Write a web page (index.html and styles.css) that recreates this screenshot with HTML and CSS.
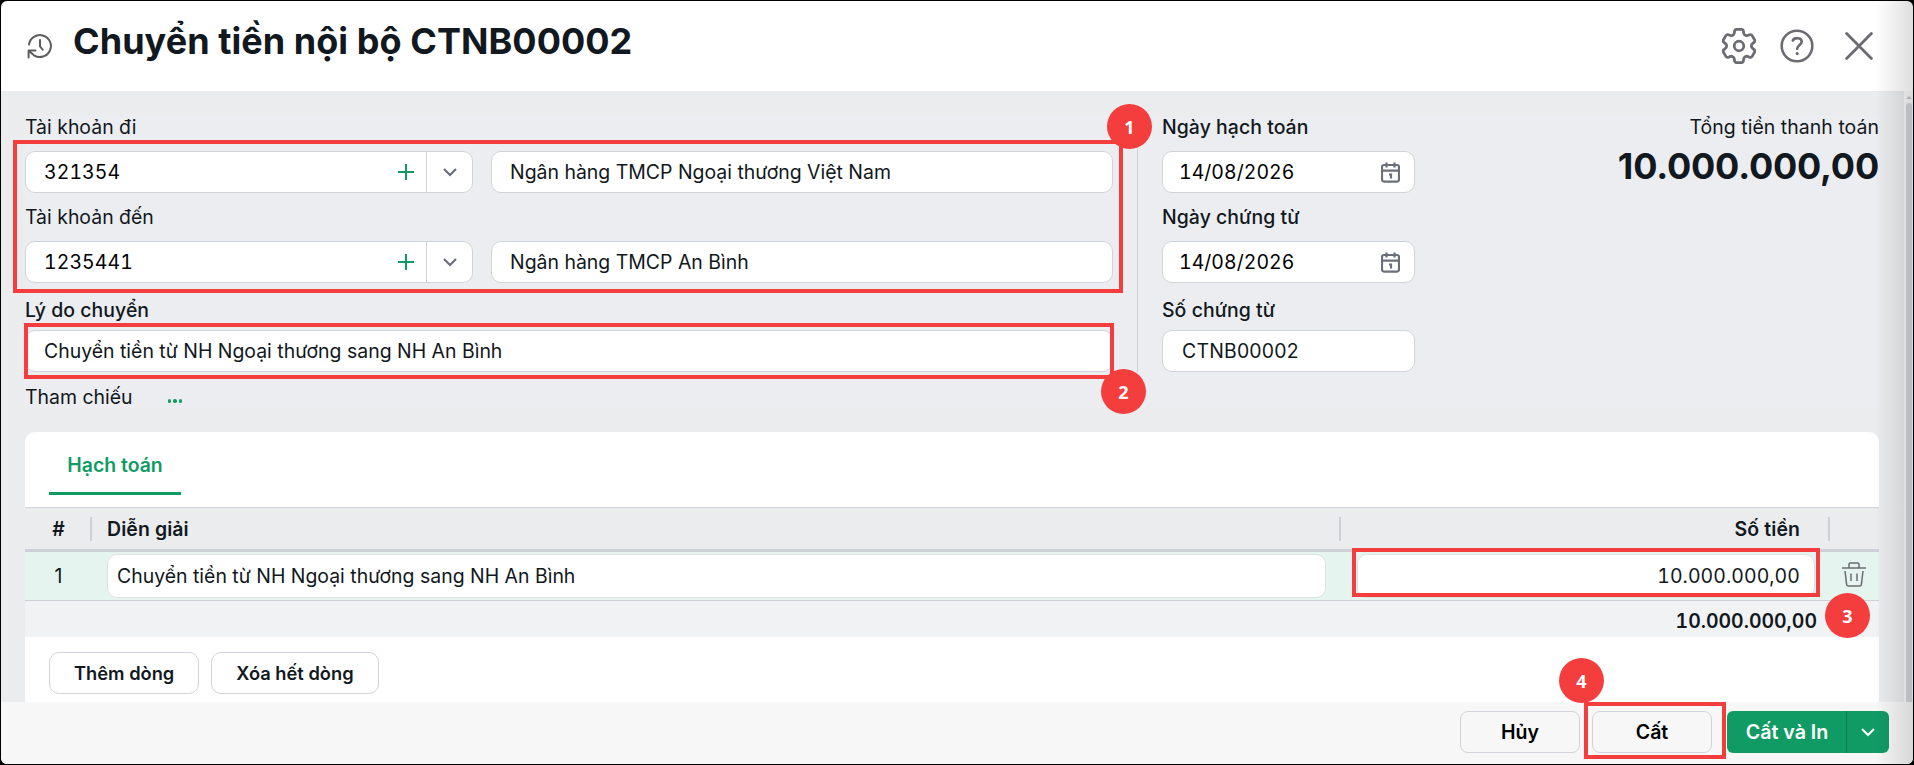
FILE: index.html
```html
<!DOCTYPE html>
<html lang="vi">
  <head>
    <meta charset="UTF-8" />
    <meta name="viewport" content="width=device-width, initial-scale=1.0" />
    <title>Chuyển tiền nội bộ</title>
    <link rel="stylesheet" href="styles.css">
  </head>
  <body>
    <div class="popup">
      <header class="header">
        <svg class="icon history" viewBox="0 0 26 26">
          <path d="M2 11.5A11 11 0 1 1 7 22.3L2.5 18.5M1.6 24.5V17.6H8.5M13 7V13.4L15.6 16.6" />
        </svg>
        <h1>Chuyển tiền nội bộ CTNB00002</h1>
        <div class="tools">
          <svg class="icon gear" viewBox="2.76 2.22 18.48 19.57">
            <path d="M9.594 3.94c.09-.542.56-.94 1.11-.94h2.593c.55 0 1.02.398 1.11.94l.213 1.281c.063.374.313.686.645.87.074.04.147.083.22.127.325.196.72.257 1.075.124l1.217-.456a1.125 1.125 0 0 1 1.37.49l1.296 2.247a1.125 1.125 0 0 1-.26 1.431l-1.003.827c-.293.241-.438.613-.43.992a7.723 7.723 0 0 1 0 .255c-.008.378.137.75.43.991l1.004.827c.424.35.534.955.26 1.43l-1.298 2.247a1.125 1.125 0 0 1-1.369.491l-1.217-.456c-.355-.133-.75-.072-1.076.124a6.47 6.47 0 0 1-.22.128c-.331.183-.581.495-.644.869l-.213 1.281c-.09.543-.56.94-1.11.94h-2.594c-.55 0-1.019-.398-1.11-.94l-.213-1.281c-.062-.374-.312-.686-.644-.87a6.52 6.52 0 0 1-.22-.127c-.325-.196-.72-.257-1.076-.124l-1.217.456a1.125 1.125 0 0 1-1.369-.49l-1.297-2.247a1.125 1.125 0 0 1 .26-1.431l1.004-.827c.292-.24.437-.613.43-.991a6.932 6.932 0 0 1 0-.255c.007-.38-.138-.751-.43-.992l-1.004-.827a1.125 1.125 0 0 1-.26-1.43l1.297-2.247a1.125 1.125 0 0 1 1.37-.491l1.216.456c.356.133.751.072 1.076-.124.072-.044.146-.086.22-.128.332-.183.582-.495.644-.869l.214-1.28Z" />
            <circle cx="12" cy="12" r="2.6" />
          </svg>
          <svg class="icon help" viewBox="0 0 34 34">
            <circle cx="17" cy="17" r="15.3" />
            <path d="M12.8 11.6C14 8.4 21.6 8 21.8 12.6C21.8 16 17.2 16 17.2 19.8" />
            <circle class="dot" cx="17.2" cy="24.6" r="1.6" />
          </svg>
          <svg class="icon close" viewBox="0 0 28 28">
            <path d="M1.6 1.6L26.4 26.4M26.4 1.6L1.6 26.4" />
          </svg>
        </div>
      </header>

      <main class="content">
        <div class="master">
          <div class="left">
            <label>Tài khoản đi</label>
            <div class="account">
              <div class="combo">
                <span>321354</span>
                <svg class="plus" viewBox="0 0 16 16"><path d="M8 0V16M0 8H16" /></svg>
                <div class="arrow">
                  <svg viewBox="0 0 14 9"><path d="M1 1L7 7L13 1" /></svg>
                </div>
              </div>
              <div class="input bank">Ngân hàng TMCP Ngoại thương Việt Nam</div>
            </div>
            <label>Tài khoản đến</label>
            <div class="account">
              <div class="combo">
                <span>1235441</span>
                <svg class="plus" viewBox="0 0 16 16"><path d="M8 0V16M0 8H16" /></svg>
                <div class="arrow">
                  <svg viewBox="0 0 14 9"><path d="M1 1L7 7L13 1" /></svg>
                </div>
              </div>
              <div class="input bank">Ngân hàng TMCP An Bình</div>
            </div>
            <label class="last">Lý do chuyển</label>
            <div class="input reason">Chuyển tiền từ NH Ngoại thương sang NH An Bình</div>
            <div class="reference">
              <span>Tham chiếu</span>
              <a class="more" href="#"><i></i><i></i><i></i></a>
            </div>
          </div>
          <div class="right">
            <label>Ngày hạch toán</label>
            <div class="input date">
              <span>14/08/2026</span>
              <svg class="calendar" viewBox="0 0 19 21">
                <rect x="1" y="3" width="17" height="16.6" rx="2" />
                <path d="M1 8.7H18M5.5 .5V5.5M13.5 .5V5.5M8 12.5H10V16.5" />
              </svg>
            </div>
            <label>Ngày chứng từ</label>
            <div class="input date">
              <span>14/08/2026</span>
              <svg class="calendar" viewBox="0 0 19 21">
                <rect x="1" y="3" width="17" height="16.6" rx="2" />
                <path d="M1 8.7H18M5.5 .5V5.5M13.5 .5V5.5M8 12.5H10V16.5" />
              </svg>
            </div>
            <label class="last">Số chứng từ</label>
            <div class="input number">CTNB00002</div>
          </div>
          <div class="total">
            <p>Tổng tiền thanh toán</p>
            <strong>10.000.000,00</strong>
          </div>
        </div>

        <div class="detail">
          <div class="tabs"><div class="tab">Hạch toán</div></div>
          <div class="row head">
            <div class="col-no">#</div>
            <div class="col-desc">Diễn giải</div>
            <div class="col-money">Số tiền</div>
            <div class="col-action"></div>
          </div>
          <div class="row line">
            <div class="col-no">1</div>
            <div class="col-desc"><div class="cell">Chuyển tiền từ NH Ngoại thương sang NH An Bình</div></div>
            <div class="col-money"><div class="cell money">10.000.000,00</div></div>
            <div class="col-action">
              <svg class="trash" viewBox="0 0 24 25">
                <path d="M0 6H24M7 6V2.2Q7 1 8.2 1H15.8Q17 1 17 2.2V6M3 9L4.6 22.4Q4.8 24 6.4 24H17.6Q19.2 24 19.4 22.4L21 9M9 11.5V19M15 11.5V19" />
              </svg>
            </div>
          </div>
          <div class="sum">10.000.000,00</div>
          <div class="actions">
            <button class="btn">Thêm dòng</button>
            <button class="btn">Xóa hết dòng</button>
          </div>
        </div>
        <div class="scrollbar"><div class="up"></div><div class="thumb"></div></div>
      </main>

      <footer class="footer">
        <button class="btn wide">Hủy</button>
        <button class="btn wide">Cất</button>
        <div class="split">
          <button class="save">Cất và In</button>
          <div class="drop">
            <svg viewBox="0 0 14 9"><path d="M1 1L7 7L13 1" /></svg>
          </div>
        </div>
      </footer>

      <div class="shade"></div>

      <!-- step markers -->
      <div class="mark mark1"></div>
      <div class="mark mark2"></div>
      <div class="mark mark3"></div>
      <div class="mark mark4"></div>
      <div class="step step1">1</div>
      <div class="step step2">2</div>
      <div class="step step3">3</div>
      <div class="step step4">4</div>
    </div>
  </body>
</html>
```
FILE: styles.css
```css
* {
  margin: 0;
  padding: 0;
  box-sizing: border-box;
}
body {
  width: 1914px;
  height: 765px;
  padding: 1px;
  overflow: hidden;
  background-color: #000;
  font-family: Inter, "Noto Sans", sans-serif;
  font-size: 19.45px;
  color: #111820;
}
.popup {
  position: relative;
  height: 763px;
  display: flex;
  flex-direction: column;
  overflow: hidden;
  border-radius: 6px;
  background-color: #fff;
}
svg {
  display: block;
  fill: none;
  stroke: #6b6f7a;
  stroke-width: 2;
}
.header {
  height: 90px;
  padding: 0 40px 0 26px;
  display: flex;
  align-items: center;
}
.header h1 {
  margin-left: 20px;
  padding-bottom: 10px;
  font-size: 36px;
  font-weight: 700;
  line-height: 44px;
  letter-spacing: 0.05px;
}
.icon {
  stroke: #6b6c72;
  stroke-linecap: round;
  stroke-linejoin: round;
}
.history {
  width: 26px;
  height: 26px;
  stroke: #5c5c5e;
}
.tools {
  margin-left: auto;
  display: flex;
  align-items: center;
}
.gear {
  width: 34px;
  height: 36px;
  margin-right: 24px;
  stroke-width: 1.5;
}
.help {
  width: 34px;
  height: 34px;
  margin-right: 31px;
  stroke-width: 2.6;
}
.help .dot {
  fill: #6b6c72;
  stroke: none;
}
.close {
  width: 28px;
  height: 28px;
  stroke-width: 2.8;
}

.content {
  position: relative;
  height: 611px;
  padding: 24px 34px 0 24px;
  background-color: #ebecee;
  overflow: hidden;
}
.master {
  height: 293px;
  display: flex;
  background-color: #ecedf1;
}
.left {
  width: 1113px;
  height: 257px;
  padding-right: 24px;
  border-right: 1px solid #d0d3d9;
}
.right {
  width: 253px;
  margin-left: 24px;
}
label {
  display: block;
  height: 48px;
  line-height: 24px;
}
.left label:first-child,
.right label:first-child {
  height: 36px;
}
label:not(:first-child) {
  padding-top: 12px;
}
label.last {
  height: 47px;
  padding-top: 15px;
}
.right label,
label.last {
  font-weight: 500;
  letter-spacing: 0.05px;
}
.account {
  display: flex;
  gap: 18px;
}
.combo,
.input {
  height: 42px;
  display: flex;
  align-items: center;
  background-color: #fff;
  border: 1px solid #d0d3d9;
  border-radius: 10px;
}
.combo {
  width: 448px;
  padding-left: 18px;
  color: #000;
  font-variant-numeric: tabular-nums;
  letter-spacing: 0.1px;
}
.plus {
  width: 16px;
  height: 16px;
  margin: 0 12px 0 auto;
  stroke: #119b64;
}
.arrow {
  width: 46px;
  height: 40px;
  display: flex;
  align-items: center;
  justify-content: center;
  border-left: 1px solid #d0d3d9;
}
.arrow svg {
  width: 14px;
  height: 9px;
  stroke-width: 2.2;
}
.input {
  padding: 0 18px;
}
.bank {
  flex: 1;
}
.reference {
  height: 50px;
  padding-top: 11px;
  display: flex;
  line-height: 28px;
}
.more {
  margin: 16px 0 0 35px;
  display: flex;
  gap: 2px;
}
.more i {
  width: 3.5px;
  height: 3.5px;
  border-radius: 50%;
  background-color: #119b64;
}
.date {
  padding: 0 14px 0 16px;
  justify-content: space-between;
  color: #000;
  font-variant-numeric: tabular-nums;
  letter-spacing: 0.05px;
}
.calendar {
  width: 19px;
  height: 21px;
  stroke-width: 2.2;
}
.number {
  padding-left: 19px;
  letter-spacing: 0.2px;
}
.total {
  margin-left: auto;
  text-align: right;
}
.total p {
  line-height: 24px;
  letter-spacing: 0.05px;
}
.total strong {
  display: block;
  font-size: 36px;
  font-weight: 700;
  line-height: 54px;
  letter-spacing: -0.2px;
}

.detail {
  height: 300px;
  margin-top: 24px;
  background-color: #fff;
  border-radius: 10px 10px 0 0;
  overflow: hidden;
}
.tabs {
  height: 75px;
  padding-left: 24px;
}
.tab {
  width: 132px;
  height: 63px;
  text-align: center;
  line-height: 67px;
  font-weight: 600;
  color: #119b64;
  border-bottom: 3px solid #119b64;
}
.row {
  display: grid;
  grid-template-columns: 67px 1249px 489px 1fr;
  align-items: center;
}
.head {
  height: 45px;
  background-color: #ebecee;
  border-top: 1px solid #d0d3d9;
  border-bottom: 3px solid #cdd1d7;
  font-weight: 600;
  letter-spacing: 0.1px;
}
.head > div {
  height: 24px;
  line-height: 24px;
  border-right: 2px solid #cdd1d7;
}
.head .col-action {
  border: none;
}
.col-no {
  text-align: center;
}
.head .col-no {
  padding-left: 2px;
}
.head .col-desc {
  padding-left: 15px;
}
.head .col-money {
  padding-right: 28px;
  text-align: right;
}
.line {
  height: 49px;
  background-color: #e6f4ef;
  border-bottom: 1px solid #cdd1d7;
}
.line .col-desc {
  padding: 0 15px;
}
.line .col-money {
  padding: 0 15px 0 16px;
}
.cell {
  height: 44px;
  padding: 0 9px;
  line-height: 42px;
  background-color: #fff;
  border: 1px solid #dfe2e2;
  border-radius: 10px;
}
.money {
  padding-right: 14px;
  text-align: right;
  font-variant-numeric: tabular-nums;
  letter-spacing: 0.08px;
}
.trash {
  width: 24px;
  height: 25px;
  margin: -3px 0 0 12px;
  stroke: #6b6c72;
  stroke-width: 1.5;
}
.sum {
  height: 36px;
  padding-right: 62px;
  text-align: right;
  line-height: 40px;
  font-weight: 600;
  font-variant-numeric: tabular-nums;
  background-color: #f1f2f4;
}
.actions {
  padding: 15px 24px;
  display: flex;
  gap: 12px;
}
.btn {
  height: 42px;
  padding: 0 24px;
  font: 600 18.3px Inter, "Noto Sans", sans-serif;
  color: #111820;
  background-color: transparent;
  border: 1px solid #d0d3d9;
  border-radius: 10px;
}
.scrollbar {
  position: absolute;
  top: 0;
  right: 0;
  width: 9px;
  height: 100%;
  padding-top: 5px;
  background-color: #fafafa;
}
.up {
  width: 6px;
  margin-left: 2px;
  border: 3px solid transparent;
  border-top-width: 0;
  border-bottom-color: #c3c7ce;
}
.thumb {
  width: 6px;
  height: 608px;
  margin: 4px 0 0 2px;
  border-radius: 3px;
  background-color: #d2d6dd;
}

.footer {
  height: 62px;
  padding: 9px 24px 0 0;
  display: flex;
  justify-content: flex-end;
  background-color: #f7f7f7;
}
.wide {
  width: 120px;
  margin-right: 12px;
  padding: 0;
  font-size: 19.5px;
  border-radius: 8px;
  color: #000;
}
.wide + .split {
  margin-left: 3px;
}
.split {
  width: 162px;
  height: 42px;
  display: flex;
  border-radius: 6px;
  background-color: #119b64;
}
.save {
  width: 119px;
  padding-left: 1px;
  font: 600 19.6px Inter, "Noto Sans", sans-serif;
  color: #fff;
  background: none;
  border: none;
}
.drop {
  flex: 1;
  display: flex;
  align-items: center;
  justify-content: center;
  border-left: 1px solid #0b7a4e;
}
.drop svg {
  width: 14px;
  height: 9px;
  stroke: #fff;
}
.shade {
  position: absolute;
  top: 0;
  right: 0;
  width: 38px;
  height: 100%;
  background: linear-gradient(to right, rgba(0, 0, 0, 0), rgba(0, 0, 0, 0.13));
}

.mark {
  position: absolute;
  border: 4px solid #f43d3d;
}
.mark1 {
  left: 12px;
  top: 139px;
  width: 1110px;
  height: 153px;
}
.mark2 {
  left: 23px;
  top: 322px;
  width: 1090px;
  height: 56px;
}
.mark3 {
  left: 1351px;
  top: 547px;
  width: 468px;
  height: 49px;
}
.mark4 {
  left: 1583px;
  top: 701px;
  width: 142px;
  height: 57px;
}
.step {
  position: absolute;
  width: 45px;
  height: 45px;
  border-radius: 50%;
  background-color: #f43d3d;
  color: #fff;
  text-align: center;
  font: bold 18px/47px "Open Sans", "Noto Sans", sans-serif;
}
.step1 {
  left: 1106px;
  top: 103px;
}
.step2 {
  left: 1100px;
  top: 368px;
}
.step3 {
  left: 1824px;
  top: 592px;
}
.step4 {
  left: 1558px;
  top: 657px;
}
```
